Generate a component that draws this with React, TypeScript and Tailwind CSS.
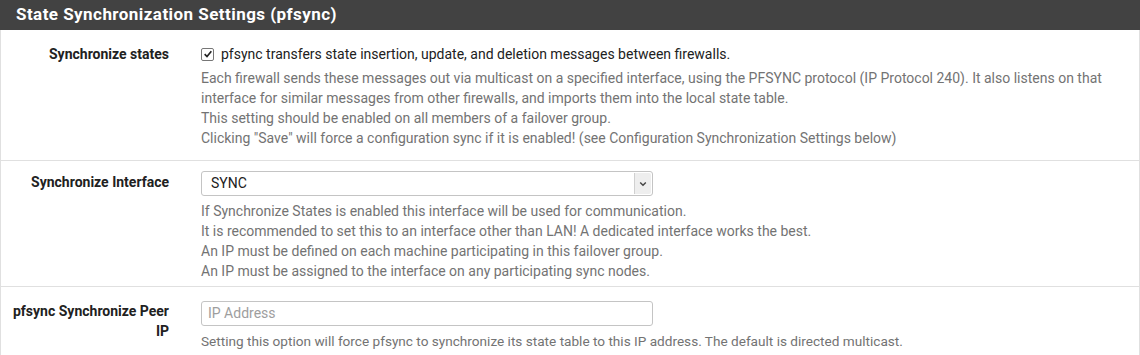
import React from "react";

const font = { fontFamily: "Roboto, 'Liberation Sans', sans-serif" };

function Label({ children }: { children: React.ReactNode }) {
  return (
    <div className="w-[185px] shrink-0 pr-[17px] text-right text-[14px] font-bold leading-[20px] text-[#212121]">
      {children}
    </div>
  );
}

export default function App() {
  return (
    <div className="w-[1140px] h-[355px] overflow-hidden bg-white" style={font}>
      <div className="border-x border-[#e0e0e0] w-[1140px]">
        <div className="h-[30px] bg-[#424242] -mx-px px-4 flex items-center">
          <h2 className="text-white font-bold text-[17px] tracking-[0.45px]">
            State Synchronization Settings (pfsync)
          </h2>
        </div>
        {/* Row 1 */}
        <div className="flex pt-[14px] pb-[12px] border-b border-[#e0e0e0]">
          <Label>Synchronize states</Label>
          <div className="pl-[15px] flex-1">
            <label className="flex items-center h-[20px] text-[14px] text-[#212121]">
              <span className="w-[13px] h-[13px] mr-[7px] border border-[#767676] rounded-[2px] bg-white flex items-center justify-center">
                <svg viewBox="0 0 12 12" width="10" height="10">
                  <path d="M2 6.2 L4.8 9 L10 2.8" fill="none" stroke="#222" strokeWidth="2" />
                </svg>
              </span>
              pfsync transfers state insertion, update, and deletion messages between firewalls.
            </label>
            <div className="mt-[4px] text-[14px] leading-[20px] text-[#737373]">
              Each firewall sends these messages out via multicast on a specified interface, using the PFSYNC protocol (IP Protocol 240). It also listens on that
              <br />
              interface for similar messages from other firewalls, and imports them into the local state table.
              <br />
              This setting should be enabled on all members of a failover group.
              <br />
              Clicking "Save" will force a configuration sync if it is enabled! (see Configuration Synchronization Settings below)
            </div>
          </div>
        </div>
        {/* Row 2 */}
        <div className="flex pt-[10px] pb-[5px] border-b border-[#e0e0e0]">
          <Label>
            <div className="pt-[1px]">Synchronize Interface</div>
          </Label>
          <div className="pl-[15px] flex-1">
            <div className="w-[452px] h-[25px] border border-[#c4c4c4] rounded-[3px] flex items-center justify-between pl-[9px] pr-[1px] text-[14px] text-[#212121]">
              <span>SYNC</span>
              <span className="w-[17px] h-[21px] bg-[#eeeeee] border-l border-[#d0d0d0] flex items-center justify-center rounded-r-[2px]">
                <svg viewBox="0 0 10 10" width="8" height="8">
                  <path d="M1.5 3 L5 6.5 L8.5 3" fill="none" stroke="#444" strokeWidth="1.8" />
                </svg>
              </span>
            </div>
            <div className="mt-[5px] text-[14px] leading-[20px] text-[#737373]">
              If Synchronize States is enabled this interface will be used for communication.
              <br />
              It is recommended to set this to an interface other than LAN! A dedicated interface works the best.
              <br />
              An IP must be defined on each machine participating in this failover group.
              <br />
              An IP must be assigned to the interface on any participating sync nodes.
            </div>
          </div>
        </div>
        {/* Row 3 */}
        <div className="flex pt-[14px] pb-[10px]">
          <Label>
            pfsync Synchronize Peer
            <br />
            IP
          </Label>
          <div className="pl-[15px] flex-1">
            <div className="w-[452px] h-[25px] border border-[#c4c4c4] rounded-[3px] flex items-center pl-[6px] text-[14px] text-[#9e9e9e]">
              IP Address
            </div>
            <div className="mt-[5px] text-[13.6px] leading-[20px] text-[#737373]">
              Setting this option will force pfsync to synchronize its state table to this IP address. The default is directed multicast.
            </div>
          </div>
        </div>
      </div>
    </div>
  );
}
